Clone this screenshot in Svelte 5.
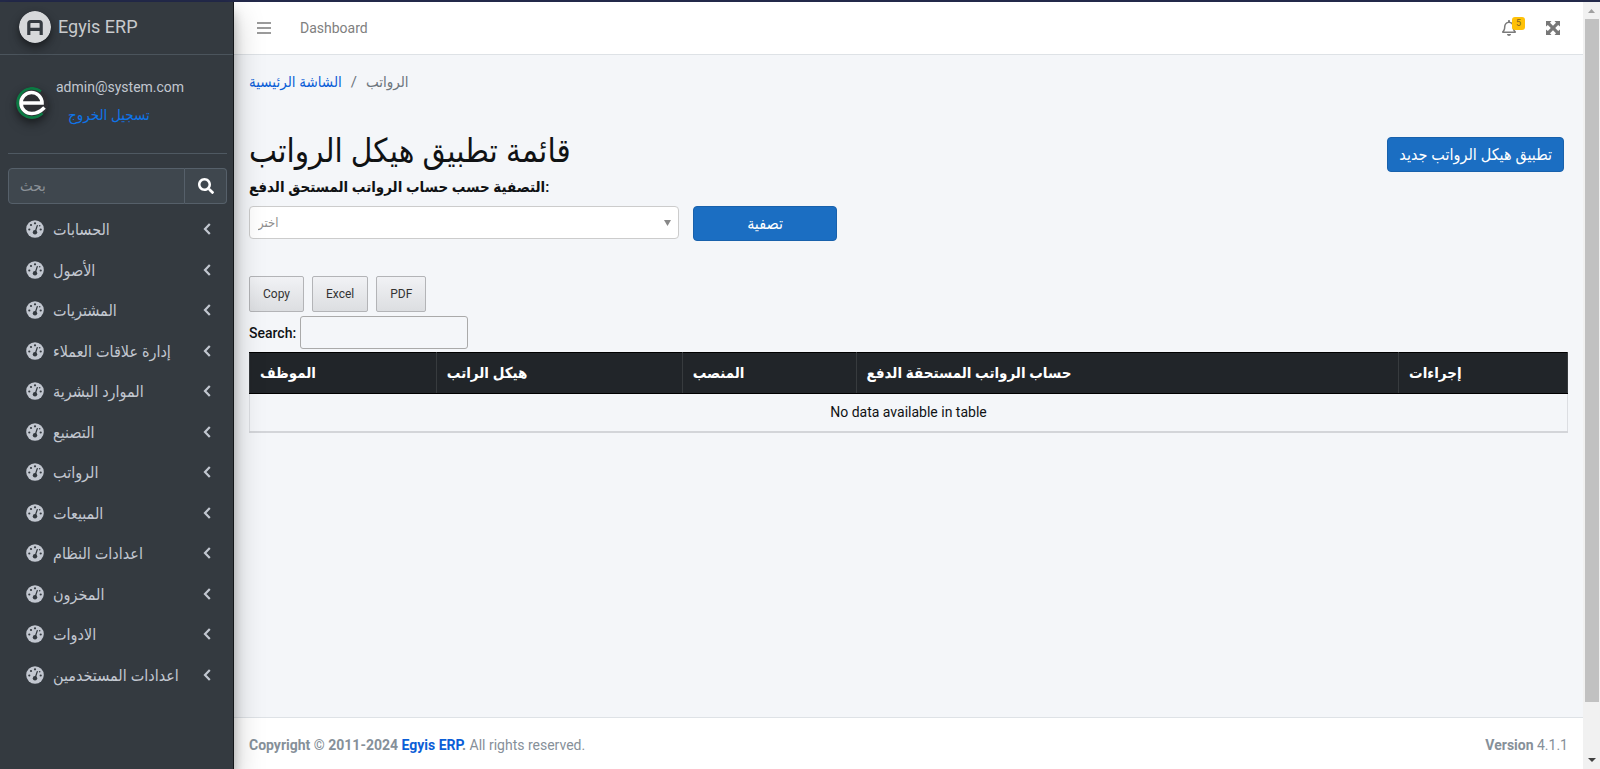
<script>
  const menu = [
    'الحسابات', 'الأصول', 'المشتريات', 'إدارة علاقات العملاء',
    'الموارد البشرية', 'التصنيع', 'الرواتب', 'المبيعات',
    'اعدادات النظام', 'المخزون', 'الادوات', 'اعدادات المستخدمين'
  ];
  const columns = [
    { label: 'الموظف', share: 187 },
    { label: 'هيكل الراتب', share: 246 },
    { label: 'المنصب', share: 174 },
    { label: 'حساب الرواتب المستحقة الدفع', share: 543 },
    { label: 'إجراءات', share: 169 }
  ];
  const total = columns.reduce((sum, c) => sum + c.share, 0);
</script>

<div class="app">
  <aside class="sidebar">
    <a class="brand" href="#home">
      <svg class="round" width="32" height="32" viewBox="0 0 32 32" aria-hidden="true">
        <circle cx="16" cy="16" r="16" fill="#d6d8da" />
        <path d="M9.800 24V12.500a2 2 0 0 1 2-2h8.400a2 2 0 0 1 2 2V24M9.800 18.300h12.400" fill="none" stroke="#343a40" stroke-width="3.200" />
      </svg>
      <span>Egyis ERP</span>
    </a>
    <div class="inner">
      <div class="user">
        <svg class="round" width="32" height="32" viewBox="0 0 32 32" aria-hidden="true">
          <circle cx="16" cy="16" r="16" fill="#2e2f33" />
          <path d="M25 4.300A14.600 14.600 0 1 0 26.500 26.300" fill="none" stroke="#0b7a43" stroke-width="2.800" />
          <path d="M5.500 16H26A10.500 10.500 0 1 0 16 26.500C20.500 26.500 24 25 28.500 20.500" fill="none" stroke="#fff" stroke-width="3.600" />
        </svg>
        <div class="who">
          <span>admin@system.com</span>
          <a href="#logout">تسجيل الخروج</a>
        </div>
      </div>
      <form class="find">
        <input type="text" placeholder="بحث" aria-label="بحث" />
        <button type="button" aria-label="بحث">
          <svg width="16" height="16" viewBox="0 0 512 512" aria-hidden="true"><path fill="#fff" d="M505 442.700L405.300 343c-4.500-4.500-10.600-7-17-7H372c27.600-35.300 44-79.700 44-128C416 93.100 322.900 0 208 0S0 93.100 0 208s93.100 208 208 208c48.300 0 92.700-16.400 128-44v16.300c0 6.400 2.500 12.500 7 17l99.700 99.700c9.400 9.400 24.600 9.400 33.900 0l28.300-28.300c9.400-9.400 9.400-24.600.1-34zM208 336c-70.700 0-128-57.200-128-128 0-70.700 57.200-128 128-128 70.700 0 128 57.200 128 128 0 70.700-57.200 128-128 128z" /></svg>
        </button>
      </form>
      <nav>
        {#each menu as item}
          <a href="#menu">
            <svg width="18" height="18" viewBox="0 0 18 18" aria-hidden="true">
              <circle cx="9" cy="9" r="8.800" fill="#c2c7d0" />
              <g fill="#343a40">
                <circle cx="9" cy="3.300" r="1.100" />
                <circle cx="5" cy="5" r="1.100" />
                <circle cx="3.300" cy="9.500" r="1.100" />
                <circle cx="14.700" cy="9.500" r="1.100" />
                <circle cx="13.700" cy="5.800" r=".8" />
                <circle cx="9" cy="12.300" r="2.200" />
              </g>
              <path d="M9.300 11.500L11.300 5.500" stroke="#343a40" stroke-width="1.200" stroke-linecap="round" />
            </svg>
            <span>{item}</span>
            <svg width="8" height="12" viewBox="0 0 8 12" aria-hidden="true"><path d="M6.800 1L2 6l4.800 5" fill="none" stroke="#c2c7d0" stroke-width="2.200" /></svg>
          </a>
        {/each}
      </nav>
    </div>
  </aside>

  <div class="page">
    <header>
      <button class="icon" type="button" aria-label="Menu">
        <svg width="14" height="12" viewBox="0 0 14 12" aria-hidden="true"><path d="M0 1h14M0 6h14M0 11h14" stroke="#7b7b7b" stroke-width="1.600" /></svg>
      </button>
      <a class="dash" href="#dashboard">Dashboard</a>
      <button class="icon bell" type="button" aria-label="Notifications">
        <svg width="14" height="16" viewBox="0 0 448 512" aria-hidden="true"><path fill="#7b7b7b" d="M439.400 362.300c-19.300-20.800-55.500-52-55.500-154.300 0-77.700-54.500-139.900-127.900-155.200V32c0-17.700-14.300-32-32-32s-32 14.300-32 32v20.800C118.600 68.100 64.100 130.300 64.100 208c0 102.300-36.200 133.500-55.500 154.300-6 6.500-8.700 14.200-8.600 21.700.1 16.400 13 32 32.100 32h383.800c19.100 0 32-15.600 32.100-32 .1-7.500-2.600-15.300-8.600-21.700zM67.500 368c21.200-27.900 44.400-74.300 44.500-159.400 0-.2-.1-.4-.1-.6 0-61.900 50.100-112 112-112s112 50.100 112 112c0 .2-.1.400-.1.600.1 85.100 23.300 131.500 44.500 159.400H67.500zM224 512c35.300 0 63.900-28.700 63.900-64H160.100c0 35.300 28.600 64 63.900 64z" /></svg>
        <span class="badge">5</span>
      </button>
      <button class="icon" type="button" aria-label="Fullscreen">
        <svg width="14" height="14" viewBox="0 0 14 14" aria-hidden="true"><path d="M0 0h5.500L4 1.800 7 4.800l3-3L8.500 0H14v5.500L12.200 4l-3 3 3 3L14 8.500V14H8.500L10 12.200l-3-3-3 3L5.500 14H0V8.500L1.800 10l3-3-3-3L0 5.500z" fill="#777" /></svg>
      </button>
    </header>

    <main>
      <div class="crumbs">
        <a href="#home">الشاشة الرئيسية</a><span>/</span><span>الرواتب</span>
      </div>
      <div class="heading">
        <h1>قائمة تطبيق هيكل الرواتب</h1>
        <button class="primary" type="button">تطبيق هيكل الرواتب جديد</button>
      </div>
      <label class="flabel" for="account">التصفية حسب حساب الرواتب المستحق الدفع:</label>
      <div class="filter">
        <div class="pick">
          <select id="account"><option>اختر</option></select>
          <svg width="7" height="6" viewBox="0 0 7 6" aria-hidden="true"><path d="M0 0h7L3.500 6z" fill="#888" /></svg>
        </div>
        <button class="primary" type="button">تصفية</button>
      </div>
      <div class="exports">
        <button type="button">Copy</button>
        <button type="button">Excel</button>
        <button type="button">PDF</button>
      </div>
      <div class="tsearch">
        <label for="q">Search:</label>
        <input id="q" type="search" />
      </div>
      <table>
        <colgroup>
          {#each columns as c}<col style="width: {(c.share / total) * 100}%" />{/each}
        </colgroup>
        <thead>
          <tr>{#each columns as c}<th>{c.label}</th>{/each}</tr>
        </thead>
        <tbody>
          <tr><td colspan={columns.length}>No data available in table</td></tr>
        </tbody>
      </table>
    </main>

    <footer>
      <span><strong>Copyright © 2011-2024 <a href="#home">Egyis ERP</a>.</strong> All rights reserved.</span>
      <span><strong>Version</strong> 4.1.1</span>
    </footer>
  </div>

  <div class="scroll" aria-hidden="true">
    <svg width="7" height="4" viewBox="0 0 7 4"><path d="M0 4L3.500 0 7 4z" fill="#a0a0a0" /></svg>
    <div class="thumb"></div>
    <svg width="8" height="4" viewBox="0 0 8 4"><path d="M0 0h8L4 4z" fill="#404040" /></svg>
  </div>
</div>

<style>
  :global(body) { margin: 0; }
  .app, .app * { box-sizing: border-box; }
  .app {
    display: flex;
    min-height: 100vh;
    border-top: 2px solid #23294a;
    background: #f4f6f9;
    color: #101214;
    font: 16px/24px Roboto, "DejaVu Sans Condensed", "DejaVu Sans", sans-serif;
  }
  a { text-decoration: none; color: #0b5ed7; }
  button, input, select { font: inherit; margin: 0; }
  button { cursor: pointer; padding: 0; }
  svg { display: block; flex: none; }

  .sidebar {
    width: 234px;
    flex: none;
    z-index: 2;
    background: #343a40;
    border-right: 1px solid #14171a;
    box-shadow: 0 14px 28px rgba(0, 0, 0, .25), 0 10px 10px rgba(0, 0, 0, .22);
    color: #c2c7d0;
  }
  .round { border-radius: 50%; box-shadow: 0 3px 6px rgba(0, 0, 0, .3), 0 6px 12px rgba(0, 0, 0, .25); }
  .brand {
    display: flex;
    align-items: center;
    gap: 7px;
    height: 53px;
    padding: 0 0 2px 19px;
    border-bottom: 1px solid #4b545c;
    color: #c8cacc;
    font-size: 18px;
  }
  .inner { padding: 0 6px 0 8px; }
  .user {
    display: flex;
    align-items: center;
    gap: 8px;
    height: 99px;
    padding: 0 0 2px 8px;
    border-bottom: 1px solid #4f5962;
  }
  .who { display: flex; flex-direction: column; gap: 4px; padding-bottom: 4px; font-size: 14px; }
  .who a { padding-left: 12px; color: #0f74e8; font-size: 15px; }
  .find { display: flex; height: 36px; margin: 14px 0 5px; }
  .find input {
    flex: 1;
    min-width: 0;
    padding: 0 11px;
    background: #3f474e;
    border: 1px solid #56606a;
    border-radius: 4px 0 0 4px;
    color: #fff;
    font-size: 15px;
  }
  .find input::placeholder { color: #8b9197; opacity: 1; }
  .find button {
    display: grid;
    place-items: center;
    width: 42px;
    background: #3f474e;
    border: 1px solid #56606a;
    border-left: 0;
    border-radius: 0 4px 4px 0;
  }
  nav { display: grid; grid-auto-rows: 1fr; min-height: 486px; }
  nav a { display: flex; align-items: center; gap: 9px; padding: 0 16px 0 18px; color: #c2c7d0; }
  nav span { flex: 1; white-space: nowrap; padding-top: 2px; }

  .page { display: flex; flex-direction: column; flex: 1; min-width: 0; }
  header {
    display: flex;
    align-items: center;
    height: 53px;
    padding: 0 23px;
    background: #fff;
    border-bottom: 1px solid #dee2e6;
  }
  .icon { display: flex; background: none; border: 0; }
  .dash { margin: 0 auto 0 29px; color: #808080; font-size: 14px; }
  .bell { position: relative; margin-right: 30px; }
  .badge {
    position: absolute;
    left: 10px;
    top: -3px;
    width: 13px;
    border-radius: 3px;
    background: #ffc107;
    color: #7d6320;
    font-size: 9px;
    line-height: 13px;
    text-align: center;
  }

  main { flex: 1; padding: 15px 15px 24px; }
  .crumbs { display: flex; gap: 9px; color: #6c757d; font-size: 15px; }
  .heading {
    display: flex;
    justify-content: space-between;
    align-items: flex-start;
    padding: 43px 4px 0 0;
  }
  h1 { margin: 0; font-size: 33px; font-weight: 400; line-height: 28px; }
  .primary {
    height: 35px;
    padding: 0 11px;
    background: #1b6ec2;
    border: 1px solid #1861ac;
    border-radius: 4px;
    color: #fff;
  }
  .flabel { display: block; margin: 3px 0 7px; font-size: 15px; font-weight: 600; }
  .filter { display: grid; grid-template-columns: 3fr 1fr 5fr; gap: 14px; align-items: start; }
  .pick { display: flex; align-items: center; }
  .pick select {
    flex: 1;
    height: 33px;
    padding: 0 8px;
    appearance: none;
    background: #fff;
    border: 1px solid #ccc;
    border-radius: 4px;
    color: #8d8d8d;
    font-size: 13px;
  }
  .pick svg { margin-left: -15px; margin-right: 8px; pointer-events: none; }
  .exports { display: flex; gap: 8px; margin: 35px 0 4px; }
  .exports button {
    height: 36px;
    padding: 0 13px;
    border: 1px solid #b3b4b7;
    border-radius: 2px;
    background: linear-gradient(#f1f2f5, #dcdee1);
    color: #333;
    font-size: 12px;
  }
  .tsearch { display: flex; align-items: center; gap: 4px; margin-bottom: 3px; font-size: 14px; font-weight: 500; }
  .tsearch input {
    width: 168px;
    height: 33px;
    border: 1px solid #aaa;
    border-radius: 3px;
    background: transparent;
  }
  table { width: 100%; table-layout: fixed; border-collapse: collapse; }
  th {
    height: 41px;
    padding: 0 10px;
    background: #212529;
    border: 1px solid #373b3e;
    border-top-color: #000;
    border-bottom-color: #000;
    color: #fff;
    font-size: 15px;
    font-weight: 700;
    text-align: left;
  }
  td {
    height: 38px;
    padding: 0;
    border: 1px solid #dcdee2;
    border-bottom: 2px solid #d3d5d9;
    font-size: 14px;
    text-align: center;
  }
  footer {
    display: flex;
    justify-content: space-between;
    align-items: center;
    height: 52px;
    padding: 3px 15px 0;
    background: #fff;
    border-top: 1px solid #dee2e6;
    color: #869099;
    font-size: 14px;
  }
  strong { font-weight: 700; }

  .scroll {
    display: flex;
    flex-direction: column;
    align-items: center;
    width: 17px;
    flex: none;
    padding: 7px 0;
    background: #f1f1f1;
  }
  .thumb { width: 14px; flex: 1; margin: 6px 0 56px; background: #c1c1c1; }
</style>
